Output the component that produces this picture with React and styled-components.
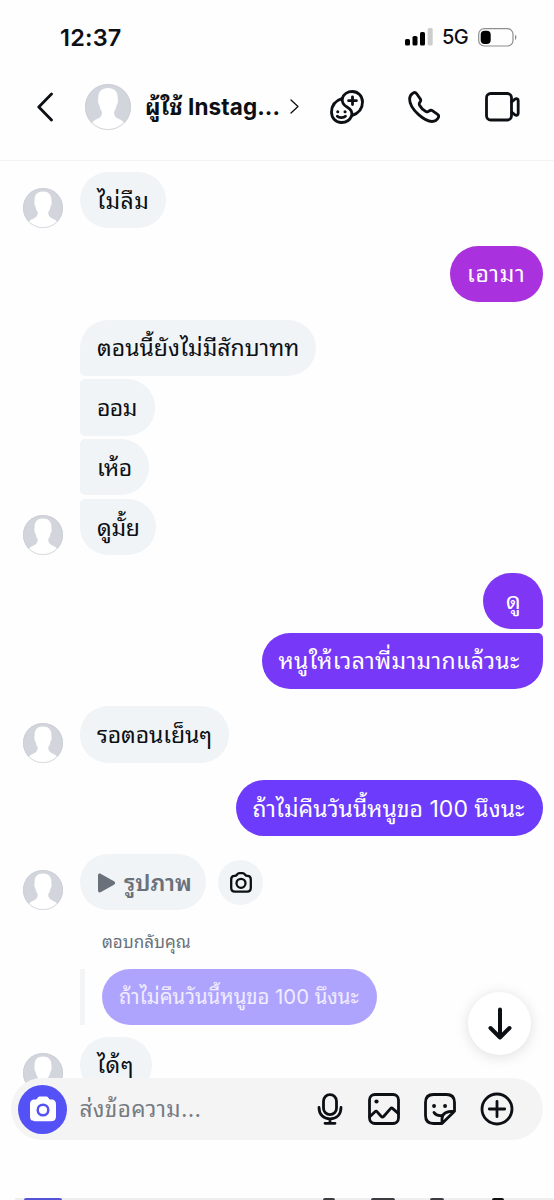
import React from 'react';
import styled, { createGlobalStyle } from 'styled-components';

const ink = '#0c1014';
const bubbleGray = '#f0f4f7';
const muted = '#6a717a';

const GlobalStyle = createGlobalStyle`
  * {
    box-sizing: border-box;
  }
  body {
    margin: 0;
    background: #fff;
    color: ${ink};
    font-family: Inter, Thonburi, 'Noto Sans Thai Looped', Loma, Garuda, Waree, Umpush, sans-serif;
  }
  svg {
    display: block;
    flex: none;
  }
`;

const Screen = styled.main`
  position: relative;
  display: flex;
  flex-direction: column;
  width: 554px;
  height: 1200px;
  overflow: hidden;
  background: #fefefe;
`;

const StatusBar = styled.div`
  display: flex;
  align-items: center;
  height: 74px;
  padding: 0 37px 0 60px;
`;

const Clock = styled.time`
  flex: 1;
  font-size: 23.5px;
  font-weight: 600;
  letter-spacing: 0.2px;
`;

const Network = styled.span`
  margin: 0 10px 0 9px;
  font-size: 20px;
  font-weight: 500;
  letter-spacing: -0.6px;
`;

const NavBar = styled.header`
  display: flex;
  align-items: center;
  height: 87px;
  padding: 0 34px 21px 37px;
  border-bottom: 1.5px solid #f3f3f4;
`;

const Profile = styled.div`
  display: flex;
  align-items: center;
  margin-left: 31px;
`;

const Title = styled.h1`
  width: 136px;
  margin: 0 9px 0 14px;
  font-size: 22.5px;
  font-weight: 700;
  line-height: 40px;
  letter-spacing: 0.1px;
  white-space: nowrap;
`;

const NavActions = styled.div`
  display: flex;
  align-items: center;
  justify-content: space-between;
  flex: 1;
  margin-left: 30.5px;
`;

const Thread = styled.section`
  display: flex;
  flex-direction: column;
  gap: 17.5px;
  padding: 11px 11.5px 0 22.5px;
`;

const Group = styled.div`
  display: flex;
  align-items: flex-end;
  justify-content: ${({ $mine }) => ($mine ? 'flex-end' : 'flex-start')};
  gap: 17.5px;
`;

const Stack = styled.div`
  display: flex;
  flex-direction: column;
  align-items: ${({ $mine }) => ($mine ? 'flex-end' : 'flex-start')};
  gap: 3.5px;
`;

const Bubble = styled.div`
  display: flex;
  align-items: center;
  width: ${({ $width }) => $width}px;
  height: 56.3px;
  padding: 1px 0 0 ${({ $inset = 17 }) => $inset}px;
  border-radius: ${({ $corners = '28px' }) => $corners};
  background: ${({ $fill = bubbleGray }) => $fill};
  color: ${({ $color = ink }) => $color};
  font-size: ${({ $size = 23 }) => $size}px;
  font-weight: ${({ $weight = 400 }) => $weight};
  letter-spacing: ${({ $spacing = 0 }) => $spacing}px;
  line-height: 40px;
  white-space: nowrap;
`;

const PhotoRow = styled.div`
  display: flex;
  align-items: center;
  gap: 12px;

  ${Bubble} {
    gap: 8px;
  }
`;

const RoundButton = styled.button`
  display: grid;
  place-items: center;
  flex: none;
  width: ${({ $size }) => $size}px;
  height: ${({ $size }) => $size}px;
  padding: 0;
  border: 0;
  border-radius: 50%;
  background: ${({ $fill }) => $fill};
  color: ${({ $color = ink }) => $color};
`;

const Reply = styled.div`
  margin: 0 0 -6px 57.5px;
`;

const ReplyLabel = styled.p`
  margin: 0 0 13px 22px;
  color: ${muted};
  font-size: 17px;
  line-height: 28px;
`;

const Quote = styled.div`
  padding-left: 17px;
  border-left: 5px solid #f3f4f5;
`;

const ScrollDown = styled(RoundButton)`
  position: absolute;
  top: 992px;
  left: 468px;
  box-shadow: 0 2px 14px rgba(0, 0, 0, 0.13);
`;

const Footer = styled.footer`
  position: absolute;
  inset: 1078px 0 0;
  display: flex;
  flex-direction: column;
  justify-content: space-between;
`;

const FooterFill = styled.div`
  position: absolute;
  inset: 62px 0 0;
  background: #fefefe;
`;

const Composer = styled.div`
  position: relative;
  display: flex;
  align-items: center;
  height: 62px;
  margin: 0 11px;
  padding: 0 29px 0 7px;
  border-radius: 31px;
  background: #f4f4f5;
`;

const Placeholder = styled.span`
  flex: 1;
  margin-left: 12.5px;
  color: #757b82;
  font-size: 22.5px;
  line-height: 40px;
  letter-spacing: 0.35px;
  white-space: nowrap;
`;

const Tools = styled.div`
  display: flex;
  align-items: center;
  gap: 24px;

  svg:first-child {
    margin-right: 1px;
  }
`;

const NextEdge = styled.div`
  position: relative;
  display: flex;
  height: 2px;
  margin-left: 15px;
  padding-left: 9px;
  background: #efeff0;
`;

const EdgeMark = styled.i`
  width: ${({ $width }) => $width}px;
  margin-right: ${({ $after = 0 }) => $after}px;
  border-radius: 2px 2px 0 0;
  background: ${({ $fill = '#3b3d40' }) => $fill};
`;

function Avatar({ size = 40 }) {
  return (
    <svg width={size} height={size} viewBox='0 0 40 40'>
      <defs>
        <clipPath id={`face-${size}`}>
          <circle cx='20' cy='20' r='20' />
        </clipPath>
      </defs>
      <g clipPath={`url(#face-${size})`}>
        <rect width='40' height='40' fill='#d2d5dc' />
        <path
          fill='#fff'
          d='M20 3.500c-5.800 0-8.600 3.300-8.400 8.900 0 1.200-.4 1.800-.2 3.300.2 1.700.9 1.900 1.200 3.200.4 2.300 1.100 3.800 2.100 5.100.2 3.200-.9 4.800-3.700 6.200-2.500 1.200-4.500 2.300-5.800 4.300V41h29.600v-6.500c-1.300-2-3.300-3.100-5.800-4.300-2.800-1.400-3.900-3-3.700-6.200 1-1.300 1.700-2.800 2.100-5.100.3-1.300 1-1.500 1.200-3.200.2-1.500-.2-2.100-.2-3.300.2-5.600-2.600-8.900-8.400-8.900z'
        />
      </g>
      <circle cx='20' cy='20' r='19.600' fill='none' stroke='#c9ccd2' strokeWidth='.7' />
    </svg>
  );
}

function Icon({ width = 32, height = 32, stroke = 2.8, children }) {
  return (
    <svg
      width={width}
      height={height}
      viewBox={`0 0 ${width} ${height}`}
      fill='none'
      stroke='currentColor'
      strokeWidth={stroke}
      strokeLinecap='round'
      strokeLinejoin='round'
    >
      {children}
    </svg>
  );
}

function Signal() {
  return (
    <svg width='28' height='18' viewBox='0 0 28 18'>
      <rect x='0' y='11' width='5' height='6.500' rx='1.600' />
      <rect x='7.500' y='8' width='5' height='9.500' rx='1.600' />
      <rect x='15' y='4' width='5' height='13.500' rx='1.600' />
      <rect x='22.700' y='0' width='5' height='17.500' rx='1.600' fill='#cdcdcd' />
    </svg>
  );
}

function Battery() {
  return (
    <svg width='39' height='19' viewBox='0 0 39 19'>
      <rect x='.7' y='.7' width='34.300' height='17.300' rx='5.500' fill='none' stroke='#8e8e8e' strokeWidth='1.200' />
      <rect x='2.700' y='2.700' width='10' height='13.300' rx='4' />
      <path d='M37 6.800c1.900.8 1.900 4.300 0 5.100z' fill='#8e8e8e' />
    </svg>
  );
}

const SMALL = '5px';
const theirs = {
  first: `28px 28px 28px ${SMALL}`,
  middle: `${SMALL} 28px 28px ${SMALL}`,
  last: `${SMALL} 28px 28px 28px`,
};

const groups = [
  { messages: [{ text: 'ไม่ลืม', width: 86, spacing: 0.4 }] },
  { mine: true, messages: [{ text: 'เอามา', width: 92.5, spacing: 0.7, fill: '#a931de' }] },
  {
    messages: [
      { text: 'ตอนนี้ยังไม่มีสักบาทท', width: 236, corners: theirs.first },
      { text: 'ออม', width: 74.5, spacing: -0.6, corners: theirs.middle },
      { text: 'เห้อ', width: 68.5, spacing: -0.3, corners: theirs.middle },
      { text: 'ดูมั้ย', width: 76, spacing: -0.3, corners: theirs.last },
    ],
  },
  {
    mine: true,
    messages: [
      { text: 'ดู', width: 59.5, inset: 23, fill: '#7f37f5', corners: `28px 28px ${SMALL} 28px` },
      {
        text: 'หนูให้เวลาพี่มามากแล้วนะ',
        width: 281,
        spacing: 0.35,
        fill: '#7838f8',
        corners: `28px ${SMALL} 28px 28px`,
      },
    ],
  },
  { messages: [{ text: 'รอตอนเย็นๆ', width: 148.5, spacing: -0.1 }] },
  { mine: true, messages: [{ text: 'ถ้าไม่คืนวันนี้หนูขอ 100 นึงนะ', width: 307, fill: '#6c3bfb' }] },
];

function MessageGroup({ mine, messages }) {
  return (
    <Group $mine={mine}>
      {!mine && <Avatar />}
      <Stack $mine={mine}>
        {messages.map(({ text, width, inset, fill, corners, spacing }) => (
          <Bubble
            key={text}
            $width={width}
            $inset={inset}
            $fill={fill}
            $corners={corners}
            $spacing={spacing}
            $color={mine ? '#fff' : ink}
          >
            <span>{text}</span>
          </Bubble>
        ))}
      </Stack>
    </Group>
  );
}

export default function App() {
  return (
    <Screen>
      <GlobalStyle />
      <StatusBar>
        <Clock>12:37</Clock>
        <Signal />
        <Network>5G</Network>
        <Battery />
      </StatusBar>

      <NavBar>
        <Icon width={17} height={30}>
          <path d='M14.500 2 1.800 15l12.700 13' />
        </Icon>
        <Profile>
          <Avatar size={46} />
          <Title>ผู้ใช้ Instag...</Title>
          <Icon width={9} height={15} stroke={1.3}>
            <path d='m1 1 7 6.500L1 14' />
          </Icon>
        </Profile>
        <NavActions>
          <Icon width={34} height={34}>
            <path d='M12.300 8.300C13.500 4.300 17.600 1.500 22.200 1.500c5.900 0 10.300 4.600 10.300 10.500 0 6.500-4.300 11.500-10.700 13.600-1.800 4.300-5.700 6.900-10.300 6.900C5.700 32.500 1.500 27.900 1.500 22c0-6.500 4.200-11.500 10.800-13.700z' />
            <path d='M12.300 8.300c-.6 4.500 1.500 7 4.700 8.700 3.500 1.800 5.500 4.300 4.800 8.600' />
            <path d='M22.500 6.800v7.800M18.600 10.700h7.800M7.200 26.200c1.700 2 6.600 2 8.300 0' />
            <path d='M7.700 21.700h.1M15 21.700h.1' strokeWidth='3' />
          </Icon>
          <Icon>
            <path d='M1.600 8C1.800 4.800 3 3 5.200 1.900c1.400-.7 2.600-.3 3.500.9l3.700 5.300c.9 1.400.2 2.300-.6 3.300s-.8 1.900-.1 3.100c1.300 2.500 3.500 4.500 6.100 5.900 1.200.6 2.100.5 3.100-.2 1.100-.9 2.100-1.500 3.400-.6l5.300 3.700c1.200.9 1.400 2 .7 3.400-1.300 2.600-3.300 3.800-6.300 3.800C17.500 30.500 1.500 19 1.600 8z' />
          </Icon>
          <Icon width={35} height={30}>
            <rect x='1.500' y='1.500' width='25' height='26.500' rx='4.200' />
            <path d='M26.700 9.800 30 7.200c1.400-1 3.200-.3 3.200 1.300v13c0 1.600-1.800 2.300-3.200 1.300l-3.300-2.600' />
          </Icon>
        </NavActions>
      </NavBar>

      <Thread>
        {groups.map((group) => (
          <MessageGroup key={group.messages[0].text} {...group} />
        ))}

        <Group>
          <Avatar />
          <PhotoRow>
            <Bubble $width={126} $color={muted} $weight={600}>
              <svg width='19' height='20' viewBox='0 0 19 20' fill={muted}>
                <path d='M1 2.500C1 .7 2.500.1 4 1l13 7.300c1.600.9 1.600 2.500 0 3.400L4 19c-1.500.9-3 .2-3-1.500z' />
              </svg>
              <span>รูปภาพ</span>
            </Bubble>
            <RoundButton $size={45} $fill={bubbleGray}>
              <Icon width={22} height={21} stroke={2.3}>
                <path d='M1.200 7.500c0-2.200 1.200-3.600 3.300-3.600 1.500 0 2-.5 2.600-1.400.7-1 1.300-1.300 2.400-1.300h3c1.100 0 1.700.3 2.400 1.300.6.9 1.100 1.400 2.600 1.400 2.100 0 3.300 1.400 3.300 3.600v8.300c0 2.500-1.200 3.800-3.700 3.800H4.900c-2.500 0-3.700-1.300-3.700-3.800z' />
                <circle cx='11' cy='11.300' r='4.500' />
              </Icon>
            </RoundButton>
          </PhotoRow>
        </Group>

        <Reply>
          <ReplyLabel>ตอบกลับคุณ</ReplyLabel>
          <Quote>
            <Bubble $width={274.5} $fill='#afa4fd' $color='#efedff' $size={20.3}>
              <span>ถ้าไม่คืนวันนี้หนูขอ 100 นึงนะ</span>
            </Bubble>
          </Quote>
        </Reply>

        <MessageGroup messages={[{ text: 'ได้ๆ', width: 72, spacing: 0.4 }]} />
      </Thread>

      <ScrollDown $size={63} $fill='#fff'>
        <Icon width={24} height={33} stroke={4}>
          <path d='M12 2.500v28M2.500 21l9.500 9.500 9.500-9.500' />
        </Icon>
      </ScrollDown>

      <Footer>
        <FooterFill />
        <Composer>
          <RoundButton $size={49} $fill='#5452f6' $color='#fff'>
            <svg width='28' height='26' viewBox='0 0 28 26'>
              <path
                fill='#fff'
                d='M1 8.500C1 5 2.500 3.500 6 3.500c1.300 0 1.700-.3 2.300-1.300C9 1 9.800.500 11 .500h6c1.200 0 2 .5 2.700 1.700.6 1 1 1.300 2.300 1.300 3.500 0 5 1.500 5 5v11.500c0 3.500-1.500 5.200-5 5.200H6c-3.500 0-5-1.700-5-5.200z'
              />
              <circle cx='14' cy='14' r='5.300' fill='none' stroke='#5452f6' strokeWidth='2.500' />
            </svg>
          </RoundButton>
          <Placeholder>ส่งข้อความ...</Placeholder>
          <Tools>
            <Icon width={26}>
              <rect x='6.500' y='1.700' width='13' height='20' rx='6.500' />
              <path d='M2 14.500c0 7.200 4.500 11.300 11 11.300s11-4.100 11-11.300M13 26v4M8 30.300h10' />
            </Icon>
            <Icon>
              <rect x='1.500' y='1.500' width='29' height='29' rx='5.500' />
              <path d='m2 23.500 5-4.700c.8-.8 1.500-.8 2.200 0l4.100 4.700c.8.9 1.500.9 2.300 0l6.700-7.700c.9-1 1.600-1 2.500-.2l5.700 5' />
              <circle cx='8.500' cy='8.500' r='2.100' fill='currentColor' stroke='none' />
            </Icon>
            <Icon>
              <path d='M18 30.500H9.500c-5.500 0-8-2.500-8-8v-13c0-5.500 2.500-8 8-8h13c5.500 0 8 2.500 8 8v8.700L18 30.500v-4.800c0-5 3.800-7.500 12.500-7.500' />
              <path d='M10 19.500c1.500 2.300 4.300 3.700 8.500 2.800' />
              <path d='M10 13h.1M21 13h.1' strokeWidth='3.800' />
            </Icon>
            <Icon width={34} height={34}>
              <circle cx='17' cy='17' r='15' />
              <path d='M17 9.300v15.400M9.300 17h15.400' />
            </Icon>
          </Tools>
        </Composer>
        <NextEdge>
          <EdgeMark $width={38} $after={261} $fill='#5452d6' />
          <EdgeMark $width={12} $after={36} />
          <EdgeMark $width={24} $after={35} />
          <EdgeMark $width={14} $after={48} />
          <EdgeMark $width={12} $fill='#111' />
        </NextEdge>
      </Footer>
    </Screen>
  );
}
